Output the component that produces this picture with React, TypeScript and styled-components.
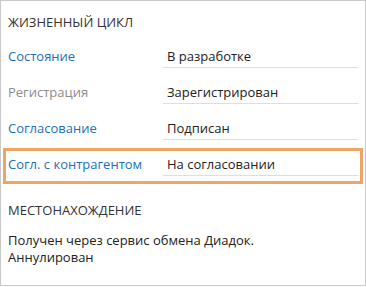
import styled, { createGlobalStyle } from 'styled-components';

const GlobalStyle = createGlobalStyle`
  html, body {
    margin: 0;
    padding: 0;
    background: #fff;
  }
  body {
    font-family: "Open Sans", "Noto Sans", sans-serif;
    font-size: 13px;
  }
`;

const Panel = styled.div`
  width: 366px;
  height: 286px;
  box-sizing: border-box;
  border: 1px solid #c9c9c9;
  padding: 13px 2px 0;
  color: #222;
`;

const SectionTitle = styled.div<{ $gap?: number }>`
  margin-top: ${(p) => p.$gap ?? 0}px;
  padding-left: 5px;
  line-height: 17px;
  color: #333;
  text-transform: uppercase;
`;

const Rows = styled.div`
  margin-top: 9px;
  display: flex;
  flex-direction: column;
`;

const Row = styled.div<{ $active?: boolean }>`
  height: 36px;
  box-sizing: border-box;
  border: 3px solid ${(p) => (p.$active ? '#eca565' : 'transparent')};
  padding: 0 2px 5px 2px;
  display: grid;
  grid-template-columns: 155px 1fr;
  align-items: end;
`;

const Label = styled.div<{ $muted?: boolean }>`
  line-height: 17px;
  padding-bottom: 3px;
  color: ${(p) => (p.$muted ? '#8c8c8c' : '#1c6fb8')};
  white-space: nowrap;
`;

const Value = styled.div`
  line-height: 17px;
  padding: 0 0 2px 4px;
  border-bottom: 1px solid #dedede;
  color: #222;
  white-space: nowrap;
`;

const Text = styled.div`
  margin-top: 13px;
  padding-left: 5px;
  line-height: 17px;
  color: #222;
`;

const rows = [
  { label: 'Состояние', value: 'В разработке' },
  { label: 'Регистрация', value: 'Зарегистрирован', muted: true },
  { label: 'Согласование', value: 'Подписан' },
  { label: 'Согл. с контрагентом', value: 'На согласовании', active: true },
];

export default function App() {
  return (
    <>
      <GlobalStyle />
      <Panel>
        <SectionTitle>Жизненный цикл</SectionTitle>
        <Rows>
          {rows.map((r) => (
            <Row key={r.label} $active={r.active}>
              <Label $muted={r.muted}>{r.label}</Label>
              <Value>{r.value}</Value>
            </Row>
          ))}
        </Rows>
        <SectionTitle $gap={18}>Местонахождение</SectionTitle>
        <Text>
          Получен через сервис обмена Диадок.
          <br />
          Аннулирован
        </Text>
      </Panel>
    </>
  );
}
